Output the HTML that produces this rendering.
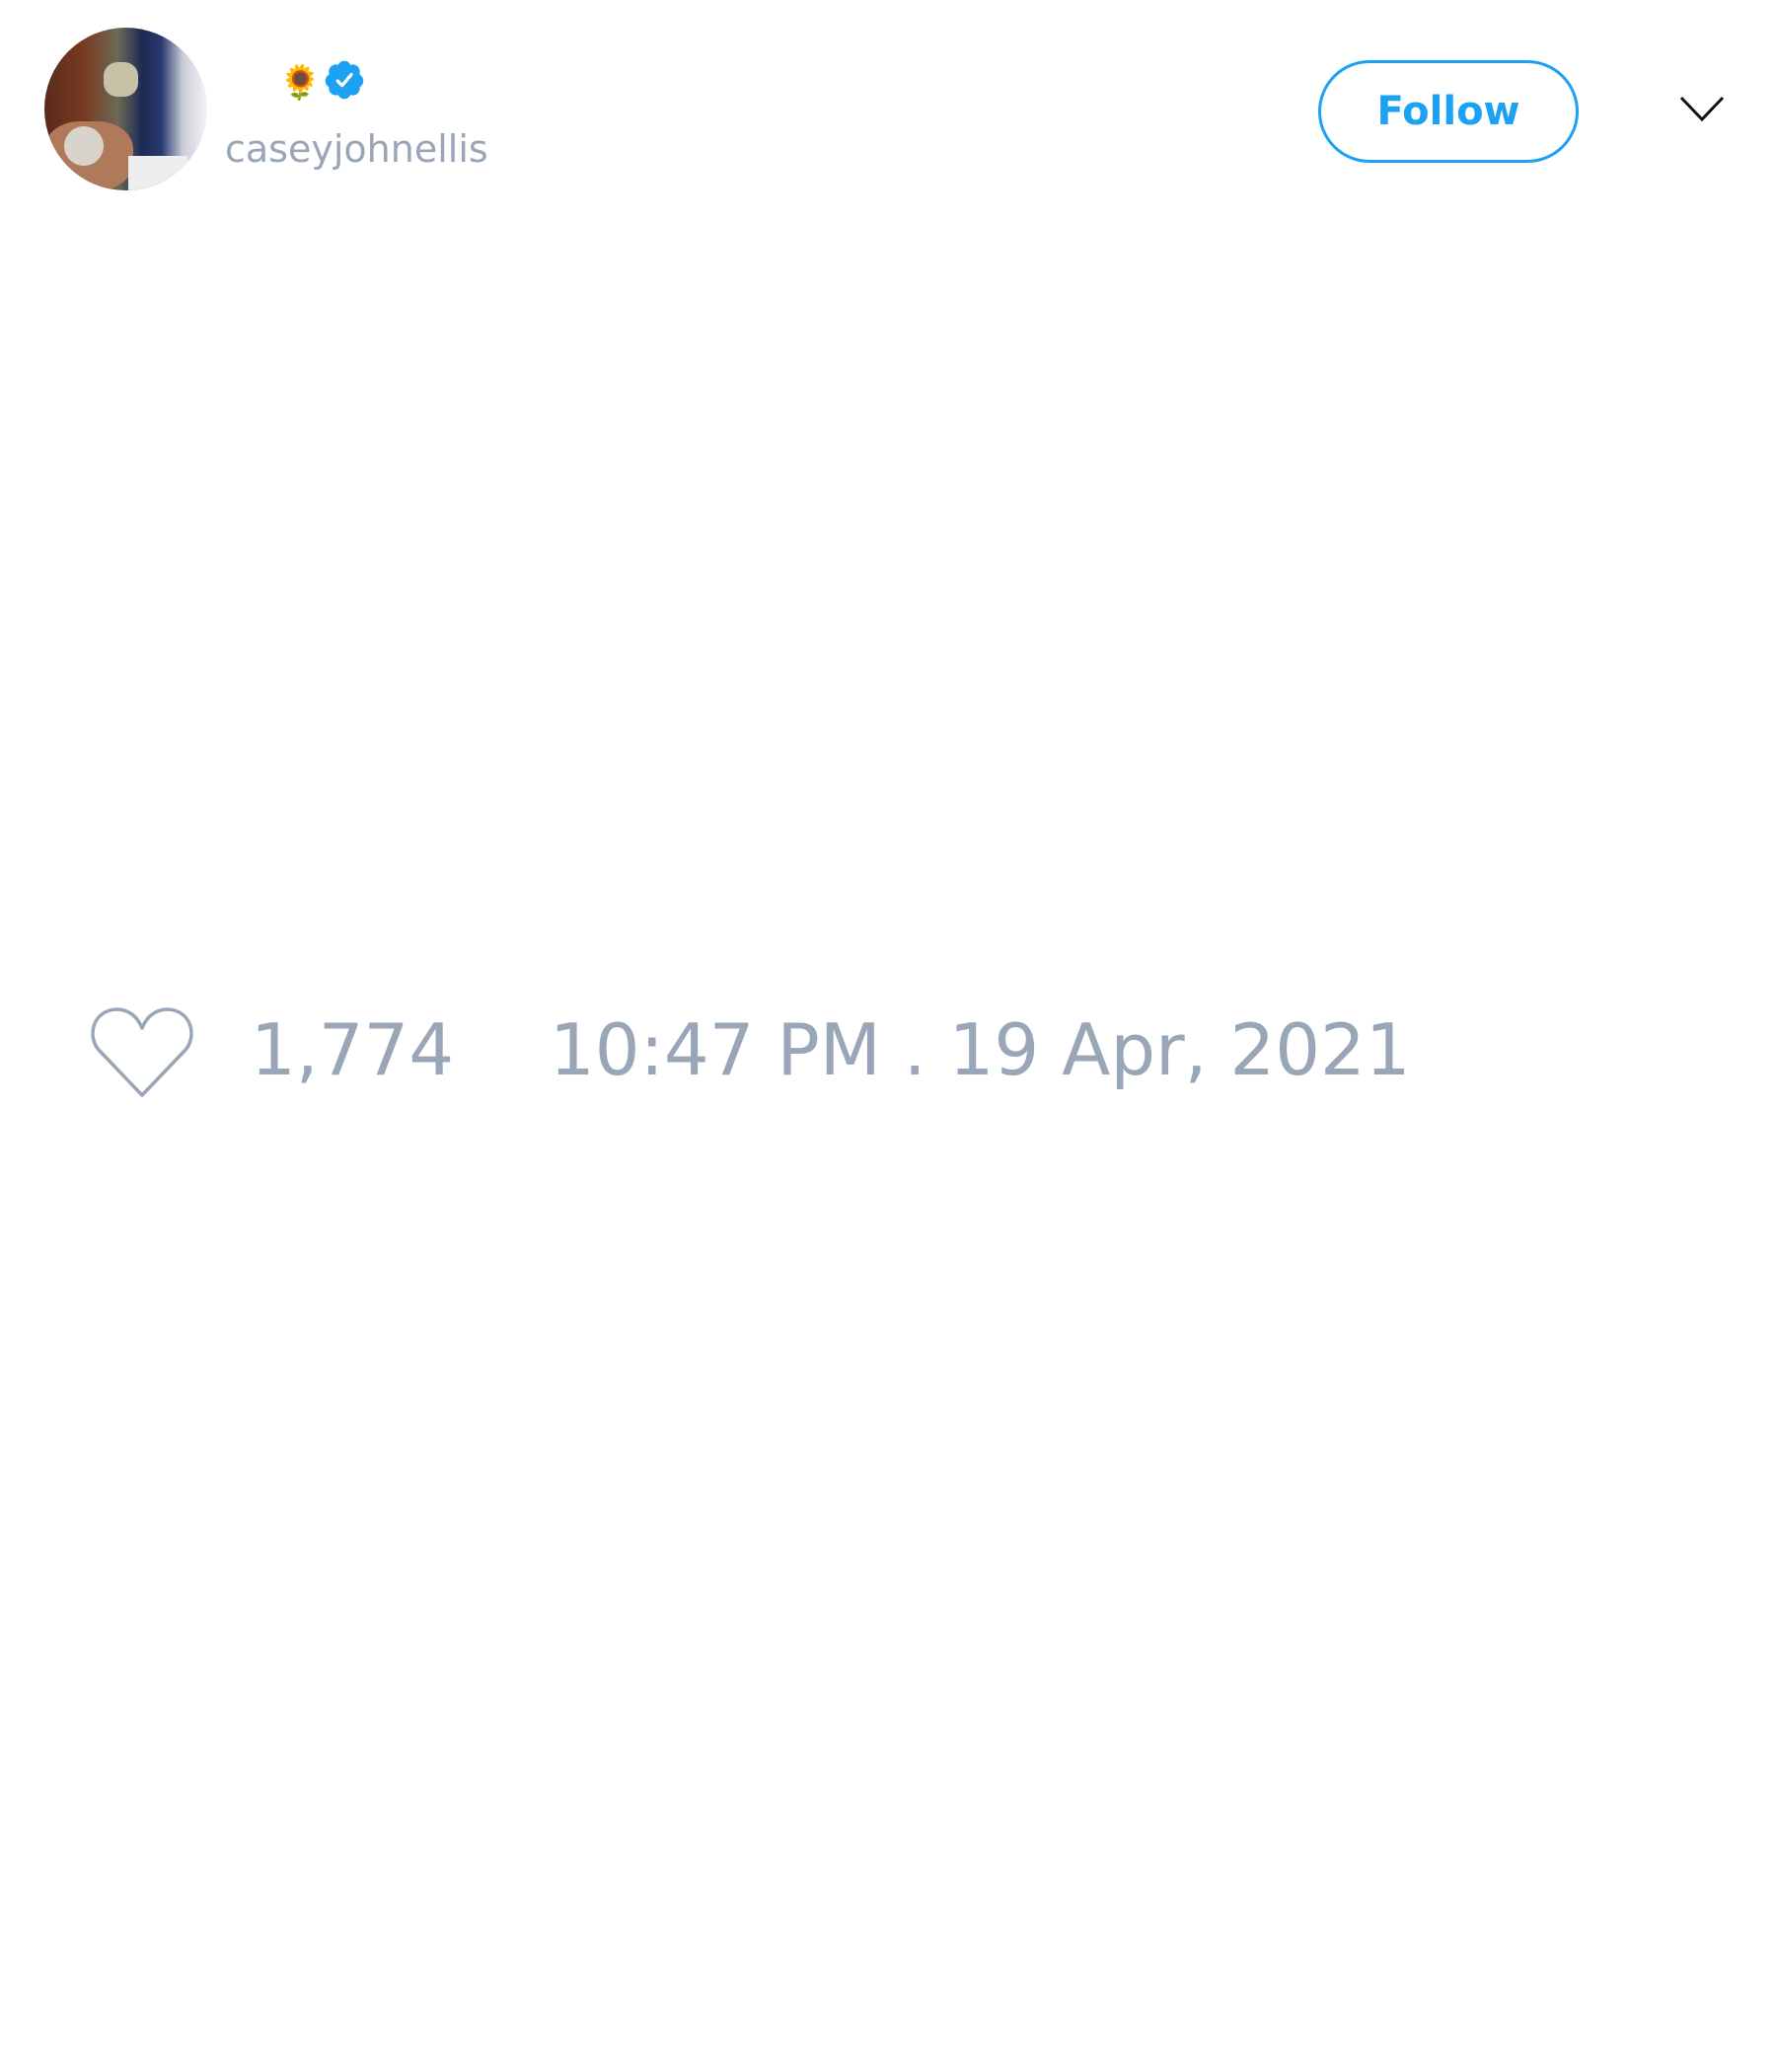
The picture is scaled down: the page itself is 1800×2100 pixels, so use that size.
<!DOCTYPE html>
<html><head><meta charset="utf-8"><style>
html,body{margin:0;padding:0;background:#fff;}
body{width:1800px;height:2100px;position:relative;overflow:hidden;font-family:"DejaVu Sans","Liberation Sans",sans-serif;}
.av{position:absolute;left:45px;top:28px;width:165px;height:165px;border-radius:50%;overflow:hidden;
background:linear-gradient(90deg,#5a2a1c 0%,#7a3a22 25%,#6b6a55 45%,#1e2a55 60%,#2a3a70 72%,#c9cdd6 85%,#f4f4f6 100%);}
.av i{position:absolute;display:block;}
.user{position:absolute;left:228px;top:126px;font-size:38px;color:#99a6b8;line-height:50px;}
.sun{position:absolute;left:283px;top:64px;font-size:34px;line-height:40px;font-family:"Noto Color Emoji","DejaVu Sans",sans-serif;}
.badge{position:absolute;left:327px;top:59px;}
.follow{position:absolute;left:1347px;top:61px;width:258px;height:98px;border:3px solid #1da1f2;border-radius:52px;
color:#1da1f2;font-weight:bold;font-size:40px;text-align:center;line-height:98px;}
.chev{position:absolute;left:1714px;top:96px;}
.heart{position:absolute;left:90px;top:1018px;}
.stats{position:absolute;top:1022px;font-size:72px;color:#99a6b8;line-height:84px;white-space:nowrap;}
</style></head><body>
<div class="av">
<i style="left:0;top:95px;width:90px;height:70px;background:#b07a5a;border-radius:40%;"></i>
<i style="left:20px;top:100px;width:40px;height:40px;background:#d8d4cc;border-radius:50%;"></i>
<i style="left:60px;top:35px;width:35px;height:35px;background:#c6c2a8;border-radius:40%;"></i>
<i style="left:85px;top:130px;width:60px;height:40px;background:#eceef0;"></i>
</div>
<div class="sun">🌻</div>
<svg class="badge" width="44" height="44" viewBox="0 0 24 24"><path fill="#1da1f2" d="M22.5 12.5c0-1.58-.875-2.950-2.148-3.6.154-.435.238-.905.238-1.4 0-2.21-1.71-3.998-3.818-3.998-.47 0-.92.084-1.336.25C14.818 2.415 13.51 1.5 12 1.5s-2.816.917-3.437 2.25c-.415-.165-.866-.25-1.336-.25-2.110 0-3.818 1.790-3.818 4 0 .494.083.964.237 1.4-1.272.65-2.147 2.018-2.147 3.6 0 1.495.782 2.798 1.942 3.486-.02.17-.032.34-.032.514 0 2.210 1.708 4 3.818 4 .47 0 .92-.086 1.335-.25.62 1.334 1.926 2.250 3.437 2.250 1.512 0 2.818-.916 3.437-2.250.415.163.865.248 1.336.248 2.110 0 3.818-1.790 3.818-4 0-.174-.012-.344-.033-.513 1.158-.687 1.943-1.990 1.943-3.484z"/><path fill="none" stroke="#fff" stroke-width="1.8" stroke-linecap="round" stroke-linejoin="round" d="M8.3 12.6l2.5 2.5 5-6"/></svg>
<div class="user">caseyjohnellis</div>
<div class="follow" style="left:1336px;">Follow</div>
<svg class="chev" style="left:1702px;" width="46" height="30" viewBox="0 0 46 30"><path d="M2 3 L23 25 L44 3" fill="none" stroke="#111" stroke-width="3"/></svg>
<svg class="heart" width="108" height="96" viewBox="0 0 108 96"><path d="M54 92 L10 46 C-2 32 4 6 28 5 C42 5 50 14 54 24 C58 14 66 5 80 5 C104 6 110 32 98 46 Z" fill="none" stroke="#99a6b8" stroke-width="3.5" stroke-linejoin="round"/></svg>
<div class="stats" style="left:254px;">1,774</div>
<div class="stats" style="left:557px;">10:47 PM . 19 Apr, 2021</div>
</body></html>
